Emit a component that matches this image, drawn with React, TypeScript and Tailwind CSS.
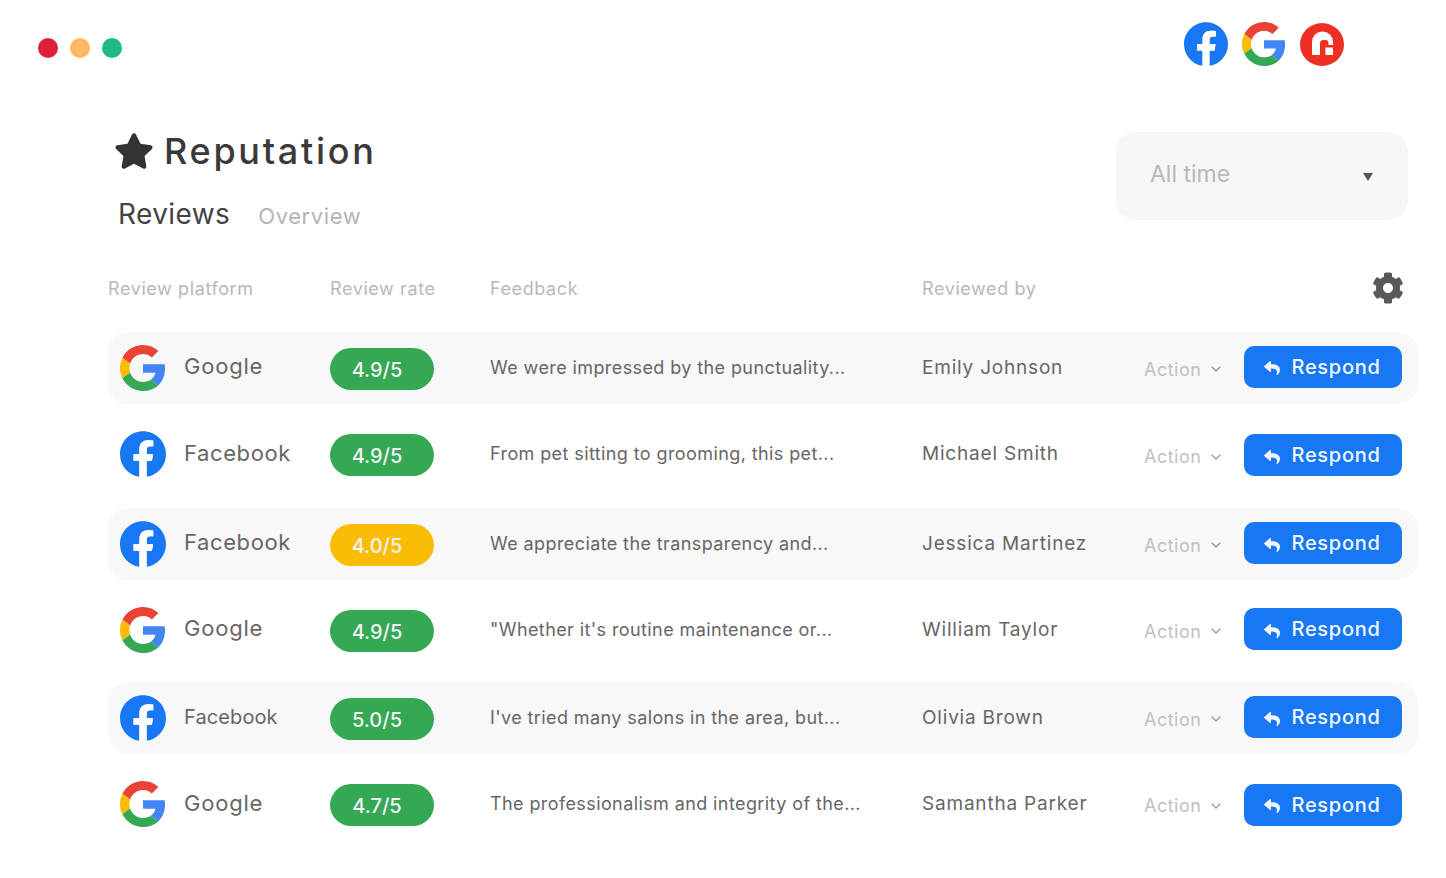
import { ChevronDown } from "lucide-react";
import { FaCog, FaReply, FaStar } from "react-icons/fa";

interface ReviewRow {
  platform: "Google" | "Facebook";
  platformClass: string;
  rate: string;
  rateColor: string;
  feedback: string;
  reviewer: string;
  rowClass: string;
  buttonClass: string;
  actionClass: string;
  labelClass: string;
}

const rows: ReviewRow[] = [
  { platform: "Google", platformClass: "text-[22px] tracking-[0.8px]", rate: "4.9/5", rateColor: "bg-[#34a853]", feedback: "We were impressed by the punctuality...", reviewer: "Emily Johnson", rowClass: "mt-[28px] bg-[#f8f8f8]", buttonClass: "mb-[3px]", actionClass: "mt-[2px]", labelClass: "mb-[4px]" },
  { platform: "Facebook", platformClass: "text-[22px] tracking-[0.6px]", rate: "4.9/5", rateColor: "bg-[#34a853]", feedback: "From pet sitting to grooming, this pet...", reviewer: "Michael Smith", rowClass: "mt-[14px]", buttonClass: "mt-[2px]", actionClass: "mt-[5px]", labelClass: "mb-[2px]" },
  { platform: "Facebook", platformClass: "text-[22px] tracking-[0.6px]", rate: "4.0/5", rateColor: "bg-[#fbbc05]", feedback: "We appreciate the transparency and...", reviewer: "Jessica Martinez", rowClass: "mt-[18px] bg-[#f8f8f8]", buttonClass: "mb-[2px]", actionClass: "mt-[2px]", labelClass: "mb-[3px]" },
  { platform: "Google", platformClass: "text-[22px] tracking-[0.8px]", rate: "4.9/5", rateColor: "bg-[#34a853]", feedback: "\"Whether it's routine maintenance or...", reviewer: "William Taylor", rowClass: "mt-[14px]", buttonClass: "mb-[2px]", actionClass: "mt-[2px]", labelClass: "mb-[3px]" },
  { platform: "Facebook", platformClass: "text-[20px] tracking-[0.1px]", rate: "5.0/5", rateColor: "bg-[#34a853]", feedback: "I've tried many salons in the area, but...", reviewer: "Olivia Brown", rowClass: "mt-[16px] bg-[#f8f8f8]", buttonClass: "mb-[2px]", actionClass: "mt-[2px]", labelClass: "mb-[3px]" },
  { platform: "Google", platformClass: "text-[22px] tracking-[0.8px]", rate: "4.7/5", rateColor: "bg-[#34a853]", feedback: "The professionalism and integrity of the...", reviewer: "Samantha Parker", rowClass: "mt-[14px]", buttonClass: "mt-[1px]", actionClass: "mt-[3px]", labelClass: "mb-[2px]" },
];

function GoogleLogo({ className }: { className: string }) {
  return (
    <svg viewBox="0 0 48 48" className={className}>
      <path fill="#EA4335" d="M24 9.5c3.54 0 6.71 1.22 9.21 3.6l6.85-6.85C35.9 2.38 30.47 0 24 0 14.62 0 6.51 5.38 2.56 13.22l7.98 6.19C12.43 13.72 17.74 9.5 24 9.5z" />
      <path fill="#4285F4" d="M46.98 24.55c0-1.57-.15-3.09-.38-4.55H24v9.02h12.94c-.58 2.96-2.26 5.48-4.78 7.18l7.73 6c4.51-4.18 7.09-10.36 7.09-17.65z" />
      <path fill="#FBBC05" d="M10.53 28.59c-.48-1.45-.76-2.99-.76-4.59s.27-3.14.76-4.59l-7.98-6.19C.92 16.46 0 20.12 0 24c0 3.88.92 7.54 2.56 10.78l7.97-6.19z" />
      <path fill="#34A853" d="M24 48c6.48 0 11.93-2.13 15.89-5.81l-7.73-6c-2.15 1.45-4.92 2.3-8.16 2.3-6.26 0-11.57-4.22-13.47-9.91l-7.98 6.19C6.51 42.62 14.62 48 24 48z" />
    </svg>
  );
}

function FacebookLogo({ className }: { className: string }) {
  return (
    <svg viewBox="0 0 24 24" className={className}>
      <path fill="#1877F2" d="M24 12.073c0-6.627-5.373-12-12-12s-12 5.373-12 12c0 5.99 4.388 10.954 10.125 11.854v-8.385H7.078v-3.47h3.047V9.43c0-3.007 1.792-4.669 4.533-4.669 1.312 0 2.686.235 2.686.235v2.953H15.83c-1.491 0-1.956.925-1.956 1.874v2.25h3.328l-.532 3.47h-2.796v8.385C19.612 23.027 24 18.062 24 12.073z" />
      <path fill="#fff" d="M16.671 15.542l.532-3.47h-3.328v-2.25c0-.949.465-1.874 1.956-1.874h1.513V4.996s-1.374-.235-2.686-.235c-2.741 0-4.533 1.662-4.533 4.669v2.642H7.078v3.47h3.047v8.385a12.1 12.1 0 0 0 3.75 0v-8.385z" />
    </svg>
  );
}

function RedLogo({ className }: { className: string }) {
  return (
    <svg viewBox="0 0 44 44" className={className}>
      <ellipse cx="22" cy="22.5" rx="22" ry="21.5" fill="#ee3024" />
      <path fill="#fff" d="M12 33V20a10.5 10.5 0 0 1 21 0v13z" />
      <path fill="#ee3024" d="M20 33V21.5a3.5 3.5 0 0 1 3.5-3.5h2a3 3 0 0 1 3 3v2h6v2.5h-9V33z" />
      <circle cx="29" cy="29.5" r="3.4" fill="#fff" />
    </svg>
  );
}

export default function App() {
  return (
    <main className="w-[1446px] h-[878px] overflow-hidden bg-white font-['Inter','Liberation_Sans',sans-serif]">
      <div className="flex items-center justify-between pt-[22px] pl-[38px] pr-[102px]">
        <div className="flex gap-3 mt-2">
          <span className="w-5 h-5 rounded-full bg-[#d9223a]" />
          <span className="w-5 h-5 rounded-full bg-[#fdb863]" />
          <span className="w-5 h-5 rounded-full bg-[#1fba85]" />
        </div>
        <div className="flex items-center gap-[14px]">
          <FacebookLogo className="w-11 h-11" />
          <GoogleLogo className="w-11 h-11" />
          <RedLogo className="w-11 h-11" />
        </div>
      </div>

      <div className="pl-[108px] pr-[28px] pt-[66px]">
        <div className="flex items-start justify-between pr-[10px]">
          <div>
            <div className="flex items-center gap-[10px] pl-[6px] h-[38px]">
              <FaStar className="w-[40px] h-[38px] text-[#333333]" />
              <h1 className="text-[36px] leading-[38px] font-medium tracking-[2.7px] text-[#3a3a3a]">Reputation</h1>
            </div>
            <div className="flex items-baseline gap-[28px] pl-[10px] mt-[25px]">
              <span className="text-[28px] leading-[38px] tracking-[0.4px] text-[#444444]">Reviews</span>
              <span className="text-[22px] leading-[38px] tracking-[0.6px] text-[#b4b4b4]">Overview</span>
            </div>
          </div>
          <div className="flex items-center justify-between w-[292px] h-[88px] rounded-[20px] bg-[#f6f6f6] pl-[34px] pr-[35px]">
            <span className="text-[23px] mb-1 text-[#b8b8b8]">All time</span>
            <svg viewBox="0 0 10 8" className="w-[10px] h-2 mt-[2px]">
              <path fill="#555555" d="M0 0h10L5 8z" />
            </svg>
          </div>
        </div>

        <div className="grid grid-cols-[222px_160px_432px_222px_1fr] items-center h-[32px] mt-[37px] text-[18px] tracking-[0.6px] text-[#b8b8b8]">
          <span>Review platform</span>
          <span>Review rate</span>
          <span>Feedback</span>
          <span>Reviewed by</span>
          <span className="flex justify-end pr-[14px]">
            <FaCog className="w-8 h-8 text-[#595959]" />
          </span>
        </div>

        {rows.map((row) => (
          <div
            key={row.reviewer}
            className={`grid grid-cols-[222px_160px_432px_222px_1fr] items-center h-[72px] rounded-[20px] ${row.rowClass}`}
          >
            <div className="flex items-center gap-[18px] pl-3">
              {row.platform === "Google" ? (
                <GoogleLogo className="w-[46px] h-[46px] shrink-0" />
              ) : (
                <FacebookLogo className="w-[46px] h-[46px] shrink-0" />
              )}
              <span className={`text-[#666666] ${row.platformClass} ${row.labelClass}`}>{row.platform}</span>
            </div>
            <div className="mt-[2px]">
              <span className={`flex items-center justify-center w-[104px] h-[42px] rounded-full pr-[10px] pt-[1px] text-[20px] font-medium text-[#f3f3f3] ${row.rateColor}`}>
                {row.rate}
              </span>
            </div>
            <span className="mb-[2px] text-[18px] tracking-[0.4px] text-[#666666]">{row.feedback}</span>
            <span className="text-[19px] tracking-[0.8px] text-[#666666]">{row.reviewer}</span>
            <div className="flex items-center justify-between pr-4">
              <span className={`flex items-center gap-[7px] text-[18px] tracking-[0.5px] text-[#c0c0c0] ${row.actionClass}`}>
                Action
                <ChevronDown className="w-4 h-4 text-[#9a9a9a]" />
              </span>
              <button className={`flex items-center justify-center gap-[10px] w-[158px] h-[42px] rounded-[10px] bg-[#1877f2] pr-[4px] text-[20px] font-medium tracking-[0.7px] text-[#f2f7ff] ${row.buttonClass}`}>
                <FaReply className="w-[20px] h-[16px] mt-[3px]" />
                Respond
              </button>
            </div>
          </div>
        ))}
      </div>
    </main>
  );
}
